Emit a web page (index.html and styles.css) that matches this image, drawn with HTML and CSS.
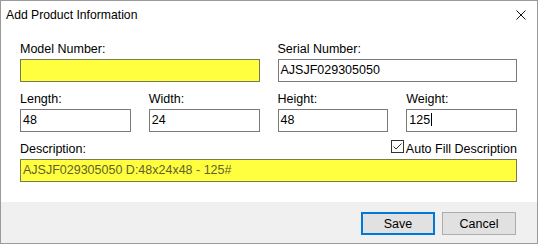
FILE: index.html
```html
<!DOCTYPE html>
<html lang="en">
<head>
    <meta charset="UTF-8">
    <title>Add Product Information</title>
    <link rel="stylesheet" href="styles.css">
</head>
<body>
    <div class="dialog">
        <div class="titlebar">
            <span class="title">Add Product Information</span>
            <span class="close">
                <svg width="10" height="10" viewBox="0 0 10 10">
                    <path d="M0.5 0.5 L9.5 9.5 M9.5 0.5 L0.5 9.5" stroke="#111" stroke-width="1" fill="none"/>
                </svg>
            </span>
        </div>

        <div class="form">
            <div class="field span2">
                <label>Model Number:</label>
                <div class="textbox highlight"></div>
            </div>
            <div class="field span2">
                <label>Serial Number:</label>
                <div class="textbox">AJSJF029305050</div>
            </div>

            <div class="field">
                <label>Length:</label>
                <div class="textbox">48</div>
            </div>
            <div class="field">
                <label>Width:</label>
                <div class="textbox">24</div>
            </div>
            <div class="field">
                <label>Height:</label>
                <div class="textbox">48</div>
            </div>
            <div class="field">
                <label>Weight:</label>
                <div class="textbox">125<span class="caret"></span></div>
            </div>

            <div class="field span4">
                <div class="desc-head">
                    <label>Description:</label>
                    <span class="check">
                        <span class="check-box">
                            <svg width="11" height="11" viewBox="0 0 11 11">
                                <path d="M1.5 5.5 L4 8 L9.5 2.5" stroke="#333" stroke-width="1" fill="none"/>
                            </svg>
                        </span>
                        <span class="check-text">Auto Fill Description</span>
                    </span>
                </div>
                <div class="textbox highlight readonly">AJSJF029305050 D:48x24x48 - 125#</div>
            </div>
        </div>

        <div class="footer">
            <button class="btn default">Save</button>
            <button class="btn">Cancel</button>
        </div>
    </div>
</body>
</html>
```

FILE: styles.css
```css
body {
    margin: 0;
    padding: 0;
    font-family: "Liberation Sans", Arial, sans-serif;
    font-size: 12.5px;
    color: #000;
    background-color: #fff;
}
.dialog {
    width: 538px;
    height: 244px;
    box-sizing: border-box;
    border: 1px solid #9a9a9a;
    background-color: #fff;
    display: flex;
    flex-direction: column;
}
.titlebar {
    height: 28px;
    display: flex;
    align-items: center;
    justify-content: space-between;
    padding: 0 11px 0 5px;
}
.title {
    font-size: 12.2px;
    line-height: 26px;
}
.close {
    display: flex;
    margin-top: -1px;
}
.form {
    display: grid;
    grid-template-columns: repeat(4, 1fr);
    column-gap: 18px;
    row-gap: 10px;
    padding: 13px 20px 0 19px;
}
.field {
    display: flex;
    flex-direction: column;
}
.span2 {
    grid-column: span 2;
}
.span4 {
    grid-column: span 4;
}
.field label {
    line-height: 15px;
    margin-bottom: 2px;
}
.textbox {
    height: 23px;
    box-sizing: border-box;
    border: 1px solid #7a7a7a;
    padding: 0 2px;
    line-height: 21px;
    white-space: nowrap;
    background-color: #fff;
}
.textbox.highlight {
    background-color: #ffff40;
    border-color: #7a7a50;
}
.textbox.readonly {
    color: #5f5f2a;
}
.caret {
    display: inline-block;
    width: 1px;
    height: 13px;
    background-color: #000;
    vertical-align: -2px;
    margin-left: 1px;
}
.desc-head {
    display: flex;
    justify-content: space-between;
    align-items: flex-end;
    margin-top: -3px;
}
.desc-head label {
    margin-bottom: 2px;
}
.check {
    display: flex;
    height: 18px;
    margin-bottom: 2px;
    margin-right: 0;
}
.check-box {
    width: 13px;
    height: 13px;
    box-sizing: border-box;
    border: 1px solid #333;
    background-color: #fff;
    margin-top: 1px;
    margin-right: 2px;
    display: flex;
}
.check-text {
    align-self: flex-end;
    line-height: 15px;
}
.footer {
    margin-top: auto;
    height: 41px;
    box-sizing: border-box;
    background-color: #f0f0f0;
    display: flex;
    justify-content: flex-end;
    align-items: flex-start;
    gap: 7px;
    padding: 10px 21px 0 0;
}
.btn {
    width: 74px;
    height: 23px;
    box-sizing: border-box;
    font-family: "Liberation Sans", Arial, sans-serif;
    font-size: 12.5px;
    color: #000;
    background-color: #e1e1e1;
    border: 1px solid #adadad;
    padding: 0;
}
.btn.default {
    border: 2px solid #0078d7;
}
```
